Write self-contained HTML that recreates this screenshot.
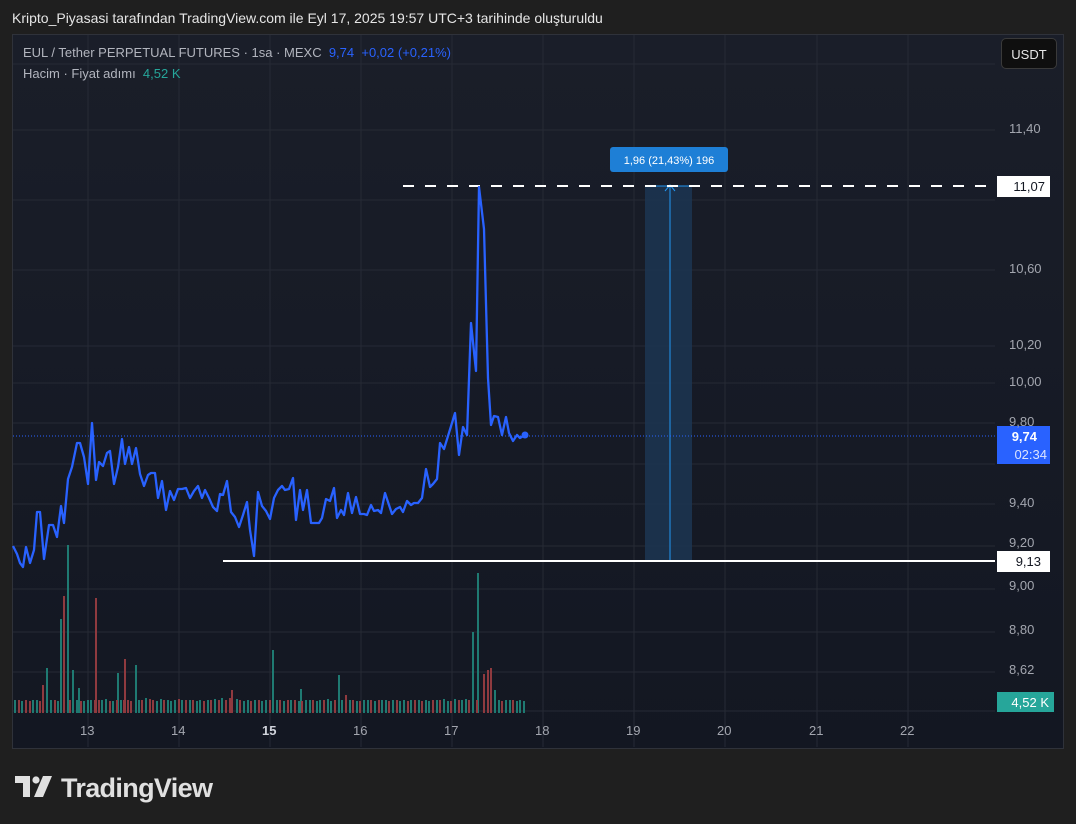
<!DOCTYPE html>
<html><head><meta charset="utf-8"><style>
body{margin:0;width:1076px;height:824px;background:#1f1f1f;font-family:"Liberation Sans",sans-serif;overflow:hidden;position:relative}
.hdr{position:absolute;left:12px;top:10px;font-size:14px;color:#e6e6e6}
.chart{position:absolute;left:12px;top:34px;width:1050px;height:713px;background:linear-gradient(#1a1e29,#131722);border:1px solid #2f323a}
.lg{position:absolute;left:23px;font-size:13px;color:#b2b5be}
.ax{position:absolute;font-size:13px;color:#a3a6af}
.usdt{position:absolute;left:1001px;top:38px;width:56px;height:31px;background:#0f0f0f;border:1px solid #3a3a3a;border-radius:5px;color:#e6e6e6;font-size:13px;text-align:center;line-height:31px;box-sizing:border-box}
</style></head><body>
<div class="hdr">Kripto_Piyasasi tarafından TradingView.com ile Eyl 17, 2025 19:57 UTC+3 tarihinde oluşturuldu</div>
<div class="chart"></div>
<svg style="position:absolute;left:0;top:0" width="1076" height="824">
<g stroke="#262a35" stroke-width="1">
<path d="M13 64H995M13 130H995M13 200H995M13 270H995M13 346H995M13 383H995M13 423H995M13 464H995M13 504H995M13 546H995M13 589H995M13 632H995M13 672H995M13 711H995"/>
<path d="M88 35V747M179 35V747M270 35V747M361 35V747M452 35V747M543 35V747M634 35V747M725 35V747M817 35V747M908 35V747"/>
</g>
<path stroke="#1f7a72" stroke-width="2" fill="none" d="M15 713V700M22 713V701M33 713V700M37 713V700M47 713V668M51 713V700M58 713V701M61 713V619M68 713V545M73 713V670M77 713V700M79 713V688M84 713V701M88 713V700M91 713V700M102 713V700M106 713V699M113 713V701M118 713V673M121 713V700M136 713V665M139 713V700M146 713V698M157 713V701M161 713V699M168 713V700M171 713V701M175 713V700M182 713V700M190 713V700M197 713V701M200 713V700M208 713V700M215 713V699M222 713V698M237 713V699M244 713V701M248 713V700M255 713V700M262 713V701M266 713V700M273 713V650M277 713V700M284 713V701M291 713V700M299 713V701M301 713V689M306 713V700M310 713V700M317 713V701M320 713V700M328 713V699M331 713V701M339 713V675M342 713V700M350 713V700M357 713V701M364 713V700M368 713V700M375 713V701M382 713V700M386 713V700M393 713V700M400 713V701M404 713V700M411 713V700M419 713V700M426 713V700M429 713V701M437 713V700M444 713V699M448 713V701M455 713V699M462 713V700M466 713V699M473 713V632M478 713V573M495 713V690M499 713V700M506 713V700M510 713V700M517 713V701M520 713V700M524 713V701"/>
<path stroke="#8f3a3f" stroke-width="2" fill="none" d="M19 713V700M26 713V700M30 713V701M40 713V701M43 713V685M55 713V700M64 713V596M70 713V700M81 713V701M95 713V700M96 713V598M99 713V700M110 713V701M117 713V700M124 713V700M125 713V659M128 713V700M131 713V701M142 713V700M150 713V699M153 713V700M164 713V700M179 713V699M186 713V700M193 713V700M204 713V701M211 713V700M219 713V700M226 713V700M230 713V698M232 713V690M240 713V700M251 713V701M259 713V700M270 713V700M280 713V700M288 713V700M295 713V700M302 713V701M313 713V700M324 713V700M335 713V700M346 713V695M353 713V700M360 713V701M371 713V700M379 713V700M389 713V701M397 713V700M408 713V701M415 713V700M422 713V701M433 713V700M440 713V700M451 713V701M459 713V700M469 713V700M477 713V700M484 713V674M488 713V670M491 713V668M502 713V701M513 713V700"/>
<rect x="645" y="186" width="47" height="375" fill="#1c3450" opacity="0.9"/>
<line x1="670" y1="186" x2="670" y2="561" stroke="#2196f3" stroke-width="1"/>
<line x1="645" y1="186" x2="692" y2="186" stroke="#2196f3" stroke-width="1"/>
<path d="M665 191L670 185L675 191" fill="none" stroke="#2196f3"/>
<rect x="610" y="147" width="118" height="25" rx="3" fill="#1e7fd6"/>
<text x="669" y="164" fill="#fff" font-size="11" text-anchor="middle" font-family="Liberation Sans">1,96 (21,43%) 196</text>
<line x1="13" y1="436" x2="995" y2="436" stroke="#2962ff" stroke-width="1" stroke-dasharray="1 2"/>
<line x1="403" y1="186" x2="995" y2="186" stroke="#fff" stroke-width="2" stroke-dasharray="11 11"/>
<line x1="223" y1="561" x2="995" y2="561" stroke="#fff" stroke-width="2"/>
<polyline fill="none" stroke="#2962ff" stroke-width="2.3" stroke-linejoin="round" points="13,546 17,554 20,563 23,567 26,547 30,563 34,550 37,512 40,512 44,559 49,525 53,525 57,537 61,506 64,523 68,479 72,467 77,443 80,443 84,457 88,484 92,423 96,480 99,462 103,466 107,453 110,451 114,484 118,467 122,439 125,464 129,447 132,464 136,448 140,474 144,486 148,475 151,473 155,473 158,498 162,481 166,510 170,491 174,500 178,489 182,489 186,488 190,498 194,491 198,486 202,498 205,490 209,498 213,507 217,511 220,494 223,495 227,481 231,512 235,517 239,527 243,515 247,502 250,530 254,556 258,492 262,506 266,511 270,519 274,498 278,490 282,486 285,490 289,489 293,478 296,520 300,490 303,510 307,490 311,523 315,523 319,523 322,518 326,499 330,501 334,488 337,518 341,510 344,515 348,493 352,513 356,497 360,514 364,514 367,515 371,505 374,511 378,510 381,513 385,493 389,505 392,514 396,509 400,507 403,512 407,501 411,505 414,503 418,503 422,498 426,469 430,487 433,484 437,479 440,443 444,449 452,423 455,413 459,455 463,427 467,435 471,323 476,371 479,187 484,229 488,378 491,425 494,416 498,417 502,435 506,417 509,433 513,441 517,435 520,438 525,435"/>
<circle cx="525" cy="435" r="3.5" fill="#2962ff"/>
<rect x="997" y="176" width="53" height="21" fill="#fff"/>
<text x="1045" y="191" fill="#131722" font-size="13" text-anchor="end" font-family="Liberation Sans">11,07</text>
<rect x="997" y="551" width="53" height="21" fill="#fff"/>
<text x="1041" y="566" fill="#131722" font-size="13" text-anchor="end" font-family="Liberation Sans">9,13</text>
<rect x="997" y="426" width="53" height="38" fill="#2962ff"/>
<text x="1037" y="441" fill="#fff" font-size="13" font-weight="bold" text-anchor="end" font-family="Liberation Sans">9,74</text>
<text x="1047" y="459" fill="#dbe4ff" font-size="13" text-anchor="end" font-family="Liberation Sans">02:34</text>
<rect x="997" y="692" width="57" height="20" fill="#26a69a"/>
<text x="1049" y="707" fill="#fff" font-size="13" text-anchor="end" font-family="Liberation Sans">4,52 K</text>
<g fill="#e0e0e0">
<path d="M15 776H30V797H23V783H15Z"/>
<circle cx="36" cy="780" r="3.6"/>
<path d="M43 776H52L43 797H34Z"/>
</g>
<text x="61" y="797" fill="#e0e0e0" font-size="27" font-weight="bold" font-family="Liberation Sans" textLength="152">TradingView</text>
</svg>
<div class="lg" style="top:45px">EUL / Tether PERPETUAL FUTURES · 1sa · MEXC&nbsp; <span style="color:#2962ff">9,74&nbsp; +0,02 (+0,21%)</span></div>
<div class="lg" style="top:66px">Hacim · Fiyat adımı&nbsp; <span style="color:#26a69a">4,52 K</span></div>
<div class="usdt">USDT</div>
<div class="ax" style="left:1009px;top:121px">11,40</div>
<div class="ax" style="left:1009px;top:261px">10,60</div>
<div class="ax" style="left:1009px;top:337px">10,20</div>
<div class="ax" style="left:1009px;top:374px">10,00</div>
<div class="ax" style="left:1009px;top:414px">9,80</div>
<div class="ax" style="left:1009px;top:495px">9,40</div>
<div class="ax" style="left:1009px;top:535px">9,20</div>
<div class="ax" style="left:1009px;top:578px">9,00</div>
<div class="ax" style="left:1009px;top:622px">8,80</div>
<div class="ax" style="left:1009px;top:662px">8,62</div>
<div class="ax" style="left:80px;top:723px">13</div>
<div class="ax" style="left:171px;top:723px">14</div>
<div class="ax" style="left:262px;top:723px;color:#d1d4dc;font-weight:bold">15</div>
<div class="ax" style="left:353px;top:723px">16</div>
<div class="ax" style="left:444px;top:723px">17</div>
<div class="ax" style="left:535px;top:723px">18</div>
<div class="ax" style="left:626px;top:723px">19</div>
<div class="ax" style="left:717px;top:723px">20</div>
<div class="ax" style="left:809px;top:723px">21</div>
<div class="ax" style="left:900px;top:723px">22</div>
</body></html>
